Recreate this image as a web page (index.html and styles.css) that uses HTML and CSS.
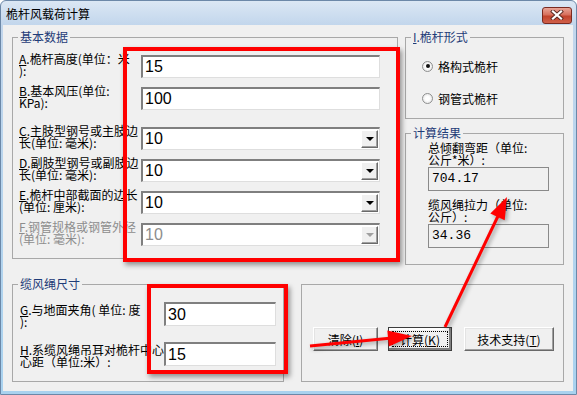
FILE: index.html
```html
<!DOCTYPE html>
<html lang="zh-CN">
<head>
  <meta charset="UTF-8" />
  <title>桅杆风载荷计算</title>
  <link rel="stylesheet" href="styles.css">
</head>
<body>
  <div class="window">
    <!-- Title bar -->
    <div class="titlebar">
      <span class="title">桅杆风载荷计算</span>
      <span class="close">
        <svg width="16" height="10" viewBox="0 0 16 10">
          <path d="M4 1.5 L12 8.5 M12 1.5 L4 8.5" stroke="#5a2a22" stroke-width="4" stroke-linecap="square"/>
          <path d="M4 1.5 L12 8.5 M12 1.5 L4 8.5" stroke="#fff" stroke-width="2.2" stroke-linecap="square"/>
        </svg>
      </span>
    </div>

    <div class="client">
      <div class="top-row">
        <fieldset class="group basic">
          <legend>基本数据</legend>
          <div class="group-body">
            <div class="field">
              <label><u>A</u>.桅杆高度(单位：米<br>):</label>
              <input class="edit" type="text" value="15">
            </div>
            <div class="field">
              <label><u>B</u>.基本风压(单位:<br>KPa):</label>
              <input class="edit" type="text" value="100">
            </div>
            <div class="field gap">
              <label><u>C</u>.主肢型钢号或主肢边<br>长(单位: 毫米):</label>
              <div class="combo"><span class="value">10</span><span class="drop"></span></div>
            </div>
            <div class="field">
              <label><u>D</u>.副肢型钢号或副肢边<br>长(单位: 毫米):</label>
              <div class="combo"><span class="value">10</span><span class="drop"></span></div>
            </div>
            <div class="field">
              <label><u>E</u>.桅杆中部截面的边长<br>(单位: 厘米):</label>
              <div class="combo"><span class="value">10</span><span class="drop"></span></div>
            </div>
            <div class="field">
              <label class="disabled"><u>F</u>.钢管规格或钢管外径<br>(单位: 毫米):</label>
              <div class="combo disabled"><span class="value">10</span><span class="drop"></span></div>
            </div>
          </div>
        </fieldset>

        <div class="side">
          <fieldset class="group mast">
            <legend><u>I</u>.桅杆形式</legend>
            <div class="group-body">
              <div class="radio checked"><span class="dot"></span>格构式桅杆</div>
              <div class="radio"><span class="dot"></span>钢管式桅杆</div>
            </div>
          </fieldset>
          <fieldset class="group result">
            <legend>计算结果</legend>
            <div class="group-body">
              <div class="res-label">总倾翻弯距（单位:<br>公斤*米）:</div>
              <div class="res-box">704.17</div>
              <div class="res-label second">缆风绳拉力（单位:<br>公斤）:</div>
              <div class="res-box">34.36</div>
            </div>
          </fieldset>
        </div>
      </div>

      <div class="bottom-row">
        <fieldset class="group rope">
          <legend>缆风绳尺寸</legend>
          <div class="group-body">
            <div class="rope-field">
              <label><u>G</u>.与地面夹角( 单位: 度<br>):</label>
              <input class="edit small" type="text" value="30">
            </div>
            <div class="rope-field">
              <label><u>H</u>.系缆风绳吊耳对桅杆中心<br>心距（单位:米）:</label>
              <input class="edit small" type="text" value="15">
            </div>
          </div>
        </fieldset>
        <div class="group actions">
          <button class="btn clear">清除(<u>I</u>)</button>
          <button class="btn calc default">计算(<u>K</u>)</button>
          <button class="btn support">技术支持(<u>T</u>)</button>
        </div>
      </div>
    </div>

    <!-- red annotation marks drawn over the dialog -->
    <div class="mark mark-main"></div>
    <div class="mark mark-rope"></div>
    <svg class="arrows" width="577" height="395" viewBox="0 0 577 395">
      <line x1="310" y1="346" x2="392" y2="338" stroke="#f00" stroke-width="3"/>
      <polygon points="412,336 388.9,346.4 387.3,330.4" fill="#f00"/>
      <line x1="445" y1="327" x2="499" y2="214" stroke="#f00" stroke-width="3"/>
      <polygon points="507,197 504.7,220.2 490.3,213.4" fill="#f00"/>
    </svg>
  </div>
</body>
</html>
```

FILE: styles.css
```css
body {
  margin: 0;
  background: #fff;
  font-family: "Noto Sans CJK SC", sans-serif;
  font-size: 12px;
  color: #000;
}

.window {
  position: relative;
  width: 577px;
  height: 395px;
  box-sizing: border-box;
  border: 1px solid #6c88a8;
  border-radius: 6px 6px 0 0;
  background: linear-gradient(to bottom, #dbe7f4, #c2d6ec 24px, #a9d2ef);
  overflow: hidden;
}

.titlebar {
  height: 24px;
  display: flex;
  align-items: center;
  justify-content: space-between;
  padding: 0 4px 0 5px;
}

.title {
  font-size: 12px;
  line-height: 12px;
  margin-top: 1px;
}

.close {
  width: 30px;
  height: 17px;
  box-sizing: border-box;
  margin-top: 4px;
  border: 1px solid #7a2a20;
  border-radius: 3px;
  background: linear-gradient(to bottom, #e9a597, #d7705d 45%, #c2432c 55%, #d0604a);
  display: flex;
  align-items: center;
  justify-content: center;
}

.client {
  margin: 0 3px 3px 2px;
  height: 366px;
  box-sizing: border-box;
  background: #f0f0f0;
  padding: 6px 9px 0 9px;
}

/* group boxes */
.group {
  margin: 0;
  padding: 0;
  min-width: 0;
  box-sizing: border-box;
  border: 1px solid #a8a8a8;
}

.group legend {
  margin-left: 5px;
  padding: 0 2px;
  line-height: 12px;
  font-size: 12px;
  color: #1f3c78;
}

.top-row {
  display: flex;
  gap: 7px;
  align-items: flex-start;
}

.basic {
  width: 386px;
  height: 228px;
}

.basic .group-body {
  padding: 12px 0 0 6px;
}

.field {
  display: flex;
  height: 23px;
}

.field + .field {
  margin-top: 9px;
}

.field.gap {
  margin-top: 17px;
}

.field label {
  width: 122px;
  flex: none;
  margin-top: -2px;
  line-height: 12px;
  white-space: nowrap;
}

label.disabled {
  color: #8d8d8d;
}

.edit {
  width: 239px;
  height: 23px;
  box-sizing: border-box;
  margin: 0;
  padding: 0 2px;
  background: #fff;
  border-top: 2px solid #7f7f7f;
  border-left: 2px solid #7f7f7f;
  border-right: 1px solid #dedede;
  border-bottom: 1px solid #dedede;
  font-family: "Liberation Sans", sans-serif;
  font-size: 16px;
  color: #000;
  outline: none;
}

.edit.small {
  width: 112px;
  height: 24px;
}

.combo {
  width: 239px;
  height: 23px;
  box-sizing: border-box;
  display: flex;
  align-items: center;
  justify-content: space-between;
  background: #fff;
  border-top: 2px solid #7f7f7f;
  border-left: 2px solid #7f7f7f;
  border-right: 1px solid #dedede;
  border-bottom: 1px solid #dedede;
  padding: 0 1px 0 2px;
  font-family: "Liberation Sans", sans-serif;
  font-size: 16px;
}

.combo .drop {
  width: 17px;
  height: 18px;
  box-sizing: border-box;
  background: #f0f0f0;
  border: 1px solid;
  border-color: #fff #6a6a6a #6a6a6a #fff;
  box-shadow: inset -1px -1px #a0a0a0;
  display: flex;
  align-items: center;
  justify-content: center;
}

.combo .drop::after {
  content: "";
  border-left: 4px solid transparent;
  border-right: 4px solid transparent;
  border-top: 4px solid #000;
}

.combo.disabled {
  color: #8d8d8d;
}

.combo.disabled .drop::after {
  border-top-color: #a0a0a0;
}

/* right column */
.side {
  width: 159px;
  display: flex;
  flex-direction: column;
  gap: 8px;
}

.mast {
  height: 88px;
}

.mast .group-body {
  padding: 16px 0 0 16px;
}

.radio {
  display: flex;
  align-items: center;
  height: 14px;
  gap: 5px;
}

.radio + .radio {
  margin-top: 18px;
}

.radio .dot {
  width: 11px;
  height: 11px;
  box-sizing: border-box;
  border-radius: 50%;
  border: 1px solid #8e8f8f;
  background: radial-gradient(circle, #fff 30%, #dcdcdc);
  display: flex;
  align-items: center;
  justify-content: center;
}

.radio.checked .dot::after {
  content: "";
  width: 4px;
  height: 4px;
  border-radius: 50%;
  background: #111;
}

.result {
  height: 138px;
}

.result .group-body {
  padding: 3px 0 0 22px;
}

.res-label {
  line-height: 12px;
  white-space: nowrap;
}

.res-label.second {
  margin-top: 8px;
}

.res-box {
  width: 121px;
  height: 24px;
  box-sizing: border-box;
  margin-top: 1px;
  border: 1px solid #8a8a8a;
  padding-left: 3px;
  font-family: "Liberation Mono", monospace;
  font-size: 13px;
  line-height: 22px;
}

/* bottom row */
.bottom-row {
  display: flex;
  margin-top: 13px;
  gap: 17px;
  align-items: flex-start;
}

.rope {
  width: 272px;
  height: 104px;
}

.rope .group-body {
  padding: 12px 0 0 7px;
}

.rope-field {
  display: flex;
  height: 24px;
}

.rope-field + .rope-field {
  margin-top: 16px;
}

.rope-field label {
  width: 144px;
  flex: none;
  margin-top: 2px;
  line-height: 12px;
  white-space: nowrap;
}

.actions {
  width: 263px;
  height: 98px;
  margin-top: 6px;
  padding: 42px 0 0 11px;
  display: flex;
  align-items: flex-start;
}

.btn {
  height: 24px;
  box-sizing: border-box;
  margin: 0;
  padding: 0;
  background: #f0f0f0;
  border: 1px solid;
  border-color: #fff #696969 #696969 #fff;
  box-shadow: inset -1px -1px #a0a0a0, inset 1px 1px #e3e3e3;
  font-family: "Noto Sans CJK SC", sans-serif;
  font-size: 12px;
  color: #000;
}

.clear {
  width: 65px;
}

.calc {
  width: 64px;
  margin-left: 10px;
}

.support {
  width: 90px;
  margin-left: 12px;
}

.btn.default {
  border: 1px solid #3c3c3c;
  box-shadow: inset -2px -2px #808080, inset 2px 2px #fff;
  outline: 1px dotted #000;
  outline-offset: -5px;
}

/* annotations */
.mark {
  position: absolute;
  box-sizing: border-box;
  border: 4px solid #ff0000;
  box-shadow: 2px 3px 5px rgba(0, 0, 0, 0.4);
}

.mark-main {
  left: 122px;
  top: 46px;
  width: 277px;
  height: 215px;
}

.mark-rope {
  left: 146px;
  top: 283px;
  width: 141px;
  height: 90px;
}

.arrows {
  position: absolute;
  left: -1px;
  top: -1px;
  pointer-events: none;
  filter: drop-shadow(2px 2px 2px rgba(0, 0, 0, 0.35));
}
```
